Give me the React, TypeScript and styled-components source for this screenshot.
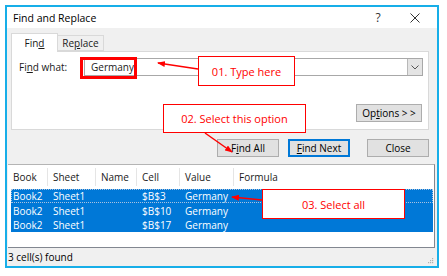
import React from "react";
import styled, { createGlobalStyle } from "styled-components";

const GlobalStyle = createGlobalStyle`
  html, body {
    margin: 0;
    padding: 0;
    background: #ffffff;
  }
  body {
    font-family: "Open Sans", "Noto Sans", sans-serif;
    font-size: 10px;
    color: #1a1a1a;
  }
  * {
    box-sizing: border-box;
  }
`;

const Dialog = styled.div`
  position: relative;
  margin: 5px 0 0 5px;
  width: 434px;
  height: 263px;
  border: 2px solid #17aee8;
  background: #f0f0f0;
  display: flex;
  flex-direction: column;
`;

const TitleBar = styled.div`
  height: 21px;
  background: #ffffff;
  display: flex;
  align-items: center;
  padding: 0 7px 0 6px;
  font-size: 10.5px;
  color: #000;
`;

const TitleText = styled.span`
  flex: 1;
`;

const TitleButton = styled.span<{ $w: number; $gap?: number }>`
  width: ${(p) => p.$w}px;
  margin-right: ${(p) => p.$gap ?? 0}px;
  display: flex;
  justify-content: center;
  font-size: 12px;
  color: #333;
`;

const Tabs = styled.div`
  display: flex;
  align-items: flex-end;
  margin-top: 5px;
  padding-left: 4px;
  position: relative;
  z-index: 1;
`;

const Tab = styled.div<{ $active?: boolean }>`
  height: ${(p) => (p.$active ? 19 : 16)}px;
  width: ${(p) => (p.$active ? 47 : 46)}px;
  display: flex;
  align-items: center;
  justify-content: center;
  background: ${(p) => (p.$active ? "#ffffff" : "#f0f0f0")};
  border: 1px solid #d9d9d9;
  border-bottom: ${(p) => (p.$active ? "none" : "1px solid #d9d9d9")};
  border-left: ${(p) => (p.$active ? "1px solid #d9d9d9" : "none")};
  margin-bottom: ${(p) => (p.$active ? -1 : 0)}px;
  font-size: 10px;
`;

const Panel = styled.div`
  margin: 0 8px 0 4px;
  height: 79px;
  background: #ffffff;
  border: 1px solid #d9d9d9;
  display: flex;
  flex-direction: column;
  padding: 6px 5px 7px 7px;
`;

const FindRow = styled.div`
  display: flex;
  align-items: center;
`;

const Label = styled.span`
  width: 65px;
  font-size: 10px;
`;

const Combo = styled.div`
  flex: 1;
  height: 18px;
  border: 1px solid #a8a8a8;
  display: flex;
  align-items: center;
  padding-left: 6px;
  font-size: 10px;
`;

const ComboValue = styled.span`
  flex: 1;
`;

const DropButton = styled.span`
  width: 15px;
  height: 16px;
  background: #e4e4e4;
  border-left: 1px solid #b8b8b8;
  display: flex;
  align-items: center;
  justify-content: center;
`;

const PanelFooter = styled.div`
  margin-top: auto;
  display: flex;
  justify-content: flex-end;
  padding-right: 1px;
`;

const Button = styled.div<{ $w: number; $default?: boolean }>`
  width: ${(p) => p.$w}px;
  height: 18px;
  background: #e1e1e1;
  border: ${(p) => (p.$default ? "2px solid #0078d7" : "1px solid #adadad")};
  display: flex;
  align-items: center;
  justify-content: center;
  font-size: 10px;
  color: #000;
`;

const ButtonRow = styled.div`
  display: flex;
  justify-content: flex-end;
  gap: 9px;
  margin-top: 9px;
  padding-right: 8px;
  & > :last-child {
    margin-left: 8px;
  }
`;

const List = styled.div`
  margin: 7px 2px 0 1px;
  height: 84px;
  background: #ffffff;
  border-top: 1px solid #b4b4b4;
  border-right: 1px solid #828790;
  border-bottom: 1px solid #828790;
  display: flex;
  flex-direction: column;
`;

const cols = "39px 48px 41px 43px 54px 1fr";

const HeaderRow = styled.div`
  display: grid;
  grid-template-columns: ${cols};
  height: 22px;
  margin-top: 1px;
  align-items: center;
  font-size: 10px;
  color: #1a1a1a;
`;

const HeaderCell = styled.span`
  padding-left: 5px;
  height: 18px;
  display: flex;
  align-items: center;
  & + & {
    border-left: 1px solid #e5e5e5;
  }
`;

const Rows = styled.div`
  margin: 1px 1px 0 3px;
`;

const Row = styled.div<{ $focus?: boolean }>`
  display: grid;
  grid-template-columns: 36px 48px 41px 43px 54px 1fr;
  height: 14.4px;
  align-items: center;
  background: #0078d7;
  color: #ffffff;
  font-size: 10px;
  outline: ${(p) => (p.$focus ? "1px dotted #a9c2e0" : "none")};
  outline-offset: -1px;
`;

const Cell = styled.span`
  padding-left: 2px;
  & + & {
    padding-left: 6px;
  }
`;

const StatusBar = styled.div`
  flex: 1;
  display: flex;
  align-items: center;
  padding: 0 3px 0 1px;
  font-size: 10px;
  color: #000;
`;

const StatusText = styled.span`
  flex: 1;
`;

const Grip = styled.svg`
  align-self: flex-end;
  margin-bottom: 2px;
`;

const Callout = styled.div<{ $x: number; $y: number; $w: number; $h: number }>`
  position: absolute;
  left: ${(p) => p.$x}px;
  top: ${(p) => p.$y}px;
  width: ${(p) => p.$w}px;
  height: ${(p) => p.$h}px;
  background: #ffffff;
  border: 1.5px solid #ff0000;
  color: #ff0000;
  font-size: 11px;
  display: flex;
  align-items: center;
  justify-content: center;
  z-index: 3;
`;

const Highlight = styled.div`
  position: absolute;
  left: 73px;
  top: 50px;
  width: 57px;
  height: 22px;
  border: 3px solid #ff0000;
  z-index: 3;
`;

const Arrows = styled.svg`
  position: absolute;
  left: -7px;
  top: -7px;
  width: 447px;
  height: 276px;
  pointer-events: none;
  z-index: 4;
`;

const headers = ["Book", "Sheet", "Name", "Cell", "Value", "Formula"];
const results = [
  ["Book2", "Sheet1", "", "$B$3", "Germany", ""],
  ["Book2", "Sheet1", "", "$B$10", "Germany", ""],
  ["Book2", "Sheet1", "", "$B$17", "Germany", ""],
];

export default function App() {
  return (
    <>
      <GlobalStyle />
      <Dialog>
        <TitleBar>
          <TitleText>Find and Replace</TitleText>
          <TitleButton $w={20} $gap={12}>?</TitleButton>
          <TitleButton $w={30}>
            <svg width="10" height="10" viewBox="0 0 10 10">
              <path d="M0.5 0.5 L9.5 9.5 M9.5 0.5 L0.5 9.5" stroke="#333" strokeWidth="1" />
            </svg>
          </TitleButton>
        </TitleBar>

        <Tabs>
          <Tab $active>
            Fin<u>d</u>
          </Tab>
          <Tab>
            Re<u>p</u>lace
          </Tab>
        </Tabs>

        <Panel>
          <FindRow>
            <Label>
              Fi<u>n</u>d what:
            </Label>
            <Combo>
              <ComboValue>Germany</ComboValue>
              <DropButton>
                <svg width="8" height="5" viewBox="0 0 8 5">
                  <path d="M0.5 0.5 L4 4 L7.5 0.5" stroke="#555" strokeWidth="1" fill="none" />
                </svg>
              </DropButton>
            </Combo>
          </FindRow>
          <PanelFooter>
            <Button $w={66}>
              Op<u>t</u>ions &gt; &gt;
            </Button>
          </PanelFooter>
        </Panel>

        <ButtonRow>
          <Button $w={62}>
            F<u>i</u>nd All
          </Button>
          <Button $w={62} $default>
            <u>F</u>ind Next
          </Button>
          <Button $w={62}>Close</Button>
        </ButtonRow>

        <List>
          <HeaderRow>
            {headers.map((h) => (
              <HeaderCell key={h}>{h}</HeaderCell>
            ))}
          </HeaderRow>
          <Rows>
            {results.map((r, i) => (
              <Row key={i} $focus={i === 0}>
                {r.map((c, j) => (
                  <Cell key={j}>{c}</Cell>
                ))}
              </Row>
            ))}
          </Rows>
        </List>

        <StatusBar>
          <StatusText>3 cell(s) found</StatusText>
          <Grip width="6" height="6" viewBox="0 0 6 6">
            <rect x="4" y="0" width="1.2" height="1.2" fill="#b0b0b0" />
            <rect x="2" y="2" width="1.2" height="1.2" fill="#b0b0b0" />
            <rect x="4" y="2" width="1.2" height="1.2" fill="#b0b0b0" />
            <rect x="0" y="4" width="1.2" height="1.2" fill="#b0b0b0" />
            <rect x="2" y="4" width="1.2" height="1.2" fill="#b0b0b0" />
            <rect x="4" y="4" width="1.2" height="1.2" fill="#b0b0b0" />
          </Grip>
        </StatusBar>

        <Highlight />
        <Callout $x={191} $y={49} $w={97} $h={30}>
          01. Type here
        </Callout>
        <Callout $x={156} $y={97} $w={143} $h={29}>
          02. Select this option
        </Callout>
        <Callout $x={255} $y={182} $w={143} $h={30}>
          03. Select all
        </Callout>

        <Arrows viewBox="0 0 447 276">
          <defs>
            <marker id="head" markerWidth="8" markerHeight="6" refX="7" refY="3" orient="auto" markerUnits="userSpaceOnUse">
              <path d="M0 0 L8 3 L0 6 Z" fill="#ff0000" />
            </marker>
          </defs>
          <line x1="198" y1="69" x2="158" y2="63" stroke="#ff0000" strokeWidth="1.5" markerEnd="url(#head)" />
          <line x1="205" y1="133" x2="232" y2="152" stroke="#ff0000" strokeWidth="1.5" markerEnd="url(#head)" />
          <line x1="262" y1="200" x2="232" y2="197" stroke="#ff0000" strokeWidth="1.5" markerEnd="url(#head)" />
        </Arrows>
      </Dialog>
    </>
  );
}
